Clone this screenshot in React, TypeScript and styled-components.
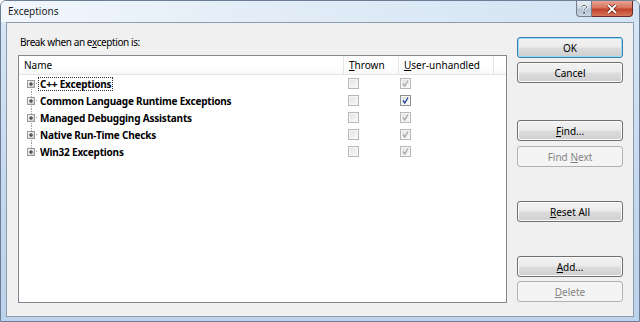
import styled, { createGlobalStyle } from "styled-components";

const GlobalStyle = createGlobalStyle`
    html, body {
        margin: 0;
        padding: 0;
        background: #ffffff;
    }
    body {
        font-family: "Noto Sans", "Open Sans", sans-serif;
        font-size: 10px;
        color: #000000;
    }
`;

const Window = styled.div`
    width: 640px;
    height: 322px;
    box-sizing: border-box;
    border: 1px solid #6b7e95;
    border-radius: 6px 6px 0 0;
    background: linear-gradient(180deg, #e9f1f9 0%, #d6e5f4 8%, #c4d8ee 60%, #bcd3eb 100%);
    display: flex;
    flex-direction: column;
    overflow: hidden;
`;

const TitleBar = styled.div`
    height: 21px;
    display: flex;
    align-items: flex-start;
    justify-content: space-between;
    padding-left: 7px;
    background: linear-gradient(90deg, #f2f7fc 0%, #e1ecf7 45%, #d3e3f3 100%);
`;

const Title = styled.span`
    line-height: 21px;
    font-size: 10px;
    color: #1b1b1b;
`;

const CaptionButtons = styled.div`
    display: flex;
    margin-right: 6px;
`;

const CaptionButton = styled.div<{ $close?: boolean }>`
    width: ${p => (p.$close ? "41px" : "16px")};
    height: 16px;
    box-sizing: border-box;
    border: 1px solid ${p => (p.$close ? "#6d2b27" : "#6f7d8c")};
    border-top: none;
    border-left: ${p => (p.$close ? "none" : undefined)};
    border-radius: ${p => (p.$close ? "0 0 4px 0" : "0 0 0 4px")};
    background: ${p =>
        p.$close
            ? "linear-gradient(180deg, #e8a493 0%, #d7735e 45%, #c2422a 55%, #d5775c 100%)"
            : "linear-gradient(180deg, #e7edf3 0%, #cfd9e4 45%, #b5c3d3 55%, #c6d3e1 100%)"};
    display: flex;
    align-items: center;
    justify-content: center;
`;

const Client = styled.div`
    flex: 1;
    margin: 0 5px 4px 5px;
    border: 1px solid #8c9bad;
    background: #f0f0f0;
    display: flex;
`;

const LeftColumn = styled.div`
    flex: 1;
    display: flex;
    flex-direction: column;
    padding: 11px 0 13px 11px;
`;

const Prompt = styled.div`
    height: 16px;
    line-height: 16px;
    padding-left: 2px;
    margin-bottom: 5px;
    font-size: 10px;
    letter-spacing: -0.4px;
`;

const ListBox = styled.div`
    flex: 1;
    border: 1px solid #828790;
    background: #ffffff;
    display: flex;
    flex-direction: column;
`;

const Columns = "325px 55px 95px 1fr";

const Header = styled.div`
    display: grid;
    grid-template-columns: ${Columns};
    height: 18px;
    border-bottom: 1px solid #e5e5e5;
    background: linear-gradient(180deg, #ffffff 0%, #ffffff 60%, #f7f8f9 100%);
`;

const HeaderCell = styled.div<{ $last?: boolean }>`
    line-height: 18px;
    padding-left: 5px;
    border-right: ${p => (p.$last ? "none" : "1px solid #e5e5e5")};
    white-space: nowrap;
    overflow: hidden;
`;

const Row = styled.div`
    display: grid;
    grid-template-columns: ${Columns};
    height: 17px;
`;

const NameCell = styled.div`
    display: flex;
    align-items: center;
`;

const NodeLabel = styled.span<{ $focused?: boolean }>`
    font-weight: 700;
    letter-spacing: -0.2px;
    line-height: 12px;
    padding: 0 1px;
    border: 1px dotted ${p => (p.$focused ? "#333333" : "transparent")};
    white-space: nowrap;
`;

const CheckCell = styled.div<{ $offset: number }>`
    padding-left: ${p => p.$offset}px;
    padding-top: 3px;
`;

const Box = styled.span<{ $enabled?: boolean }>`
    display: block;
    width: 11px;
    height: 11px;
    box-sizing: border-box;
    border: 1px solid ${p => (p.$enabled ? "#8e8f8f" : "#b7b7b7")};
    background: ${p =>
        p.$enabled
            ? "linear-gradient(135deg, #d8d8d8 0%, #f2f2f2 60%, #ffffff 100%)"
            : "linear-gradient(135deg, #e2e2e2 0%, #f0f0f0 60%, #fbfbfb 100%)"};
    box-shadow: inset 0 0 0 1px #f7f7f7;
`;

const ButtonColumn = styled.div`
    width: 106px;
    margin-left: 10px;
    padding: 14px 10px 0 0;
    display: flex;
    flex-direction: column;
`;

const Button = styled.button<{ $top: number; $default?: boolean }>`
    height: 21px;
    margin-top: ${p => p.$top}px;
    padding: 0;
    font-family: inherit;
    font-size: 10px;
    color: #000000;
    border-radius: 3px;
    border: 1px solid ${p => (p.$default ? "#3c7fb1" : "#707070")};
    background: linear-gradient(180deg, #f2f2f2 0%, #ebebeb 49%, #dddddd 51%, #cfcfcf 100%);
    box-shadow: inset 0 0 0 1px ${p => (p.$default ? "#94dcf7" : "#fbfbfb")};
    &:disabled {
        color: #838383;
        border-color: #adb2b5;
        background: #f4f4f4;
        box-shadow: none;
    }
`;

const Key = styled.u``;

function Expander({ first, last }: { first?: boolean; last?: boolean }) {
    return (
        <svg width="19" height="17" viewBox="0 0 19 17" style={{ flex: "none" }}>
            {!first && <line x1="12.5" y1="0" x2="12.5" y2="5" stroke="#a0a0a0" strokeDasharray="1 1" />}
            {!last && <line x1="12.5" y1="12" x2="12.5" y2="17" stroke="#a0a0a0" strokeDasharray="1 1" />}
            <line x1="17" y1="8.5" x2="19" y2="8.5" stroke="#a0a0a0" strokeDasharray="1 1" />
            <defs>
                <linearGradient id="exp" x1="0" y1="0" x2="1" y2="1">
                    <stop offset="0" stopColor="#ffffff" />
                    <stop offset="1" stopColor="#c6c6c6" />
                </linearGradient>
            </defs>
            <rect x="8.5" y="5.5" width="7" height="7" fill="url(#exp)" stroke="#9a9a9a" />
            <line x1="10" y1="9" x2="14" y2="9" stroke="#2a2a2a" />
            <line x1="12" y1="7" x2="12" y2="11" stroke="#2a2a2a" />
        </svg>
    );
}

function CheckBox({ checked, enabled }: { checked?: boolean; enabled?: boolean }) {
    return (
        <Box $enabled={enabled}>
            {checked && (
                <svg width="9" height="9" viewBox="0 0 9 9" style={{ display: "block" }}>
                    <path
                        d="M2 4.5 L3.8 7 L7 1.5"
                        fill="none"
                        stroke={enabled ? "#22429a" : "#a6a6a6"}
                        strokeWidth="1.3"
                    />
                </svg>
            )}
        </Box>
    );
}

const exceptions = [
    { name: "C++ Exceptions", enabled: false },
    { name: "Common Language Runtime Exceptions", enabled: true },
    { name: "Managed Debugging Assistants", enabled: false },
    { name: "Native Run-Time Checks", enabled: false },
    { name: "Win32 Exceptions", enabled: false },
];

export default function App() {
    return (
        <>
            <GlobalStyle />
            <Window>
                <TitleBar>
                    <Title>Exceptions</Title>
                    <CaptionButtons>
                        <CaptionButton>
                            <svg width="8" height="10" viewBox="0 0 8 10">
                                <path d="M1.5 3 C1.5 0.8 6.5 0.8 6.5 3 C6.5 4.6 4 4.6 4 6.5" fill="none" stroke="#ffffff" strokeWidth="2.2" />
                                <path d="M1.5 3 C1.5 0.8 6.5 0.8 6.5 3 C6.5 4.6 4 4.6 4 6.5" fill="none" stroke="#4b5a6b" strokeWidth="1" />
                                <rect x="3.3" y="8" width="1.6" height="1.6" fill="#4b5a6b" />
                            </svg>
                        </CaptionButton>
                        <CaptionButton $close>
                            <svg width="12" height="10" viewBox="0 0 12 10">
                                <path d="M2 1 L10 9 M10 1 L2 9" stroke="#5b1d14" strokeWidth="3.2" />
                                <path d="M2 1 L10 9 M10 1 L2 9" stroke="#ffffff" strokeWidth="1.8" />
                            </svg>
                        </CaptionButton>
                    </CaptionButtons>
                </TitleBar>
                <Client>
                    <LeftColumn>
                        <Prompt>
                            Break when an e<Key>x</Key>ception is:
                        </Prompt>
                        <ListBox>
                            <Header>
                                <HeaderCell>Name</HeaderCell>
                                <HeaderCell>
                                    <Key>T</Key>hrown
                                </HeaderCell>
                                <HeaderCell>
                                    <Key>U</Key>ser-unhandled
                                </HeaderCell>
                                <HeaderCell $last />
                            </Header>
                            {exceptions.map((ex, i) => (
                                <Row key={ex.name}>
                                    <NameCell>
                                        <Expander first={i === 0} last={i === exceptions.length - 1} />
                                        <NodeLabel $focused={i === 0}>{ex.name}</NodeLabel>
                                    </NameCell>
                                    <CheckCell $offset={4}>
                                        <CheckBox />
                                    </CheckCell>
                                    <CheckCell $offset={1}>
                                        <CheckBox checked enabled={ex.enabled} />
                                    </CheckCell>
                                    <div />
                                </Row>
                            ))}
                        </ListBox>
                    </LeftColumn>
                    <ButtonColumn>
                        <Button $top={0} $default>OK</Button>
                        <Button $top={4}>Cancel</Button>
                        <Button $top={37}>
                            <Key>F</Key>ind...
                        </Button>
                        <Button $top={5} disabled>
                            Find <Key>N</Key>ext
                        </Button>
                        <Button $top={34}>
                            <Key>R</Key>eset All
                        </Button>
                        <Button $top={34}>
                            <Key>A</Key>dd...
                        </Button>
                        <Button $top={4} disabled>
                            <Key>D</Key>elete
                        </Button>
                    </ButtonColumn>
                </Client>
            </Window>
        </>
    );
}
